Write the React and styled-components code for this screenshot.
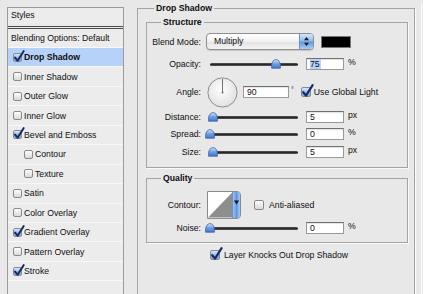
import React from "react";
import styled, { createGlobalStyle } from "styled-components";

const GlobalStyle = createGlobalStyle`
  html, body {
    margin: 0;
    padding: 0;
    background: #e8e8e8;
  }
  body {
    font-family: "Liberation Sans", Arial, sans-serif;
    font-size: 8.7px;
    color: #0e0e0e;
  }
`;

const Page = styled.div`
  display: flex;
  align-items: flex-start;
  width: 423px;
  height: 294px;
  overflow: hidden;
  padding: 3px 0 0 7px;
  box-sizing: border-box;
`;

const StylesList = styled.div`
  flex-shrink: 0;
  width: 117px;
  height: 300px;
  margin-top: 4px;
  box-sizing: border-box;
  border: 1px solid #9b9b9b;
  background: #ececec;
`;

const ListHeader = styled.div`
  height: 21px;
  box-sizing: border-box;
  padding: 1px 0 0 3px;
  line-height: 12px;
  border-bottom: 3px double #4c4c4c;
`;

const ListRow = styled.div`
  display: flex;
  align-items: center;
  gap: 2px;
  height: ${(p) => p.$h || 19.45}px;
  box-sizing: border-box;
  padding-left: ${(p) => p.$pad}px;
  border-bottom: 1px solid #f8f8f8;
  background: ${(p) => (p.$active ? "#b6d2f8" : "transparent")};
  font-weight: ${(p) => (p.$active ? "bold" : "normal")};
`;

const Group = styled.fieldset`
  margin: 0;
  min-width: 0;
  border: 1px solid #a4a4a4;
  box-shadow: 1px 1px 0 #fafafa;
  padding: ${(p) => p.$pad};
  margin-top: ${(p) => p.$mt || 0}px;
`;

const OuterGroup = styled(Group)`
  flex-shrink: 0;
  width: 278px;
  height: 320px;
  box-sizing: border-box;
  margin-left: 13px;
`;

const Legend = styled.legend`
  font-weight: bold;
  line-height: 10px;
  padding: 0 2px;
  margin-left: ${(p) => p.$ml}px;
`;

const Divider = styled.div`
  flex-shrink: 0;
  width: 1px;
  height: 300px;
  margin-left: 6px;
  background: #fbfbfb;
`;

const Row = styled.div`
  display: flex;
  align-items: center;
  height: ${(p) => p.$h}px;
  margin-top: ${(p) => p.$mt}px;
  padding-left: ${(p) => p.$pl || 0}px;
`;

const Label = styled.span`
  flex-shrink: 0;
  width: 54px;
  margin-right: 5px;
  text-align: right;
  white-space: nowrap;
`;

const Select = styled.div`
  display: flex;
  width: 108px;
  height: 17px;
  box-sizing: border-box;
  border: 1px solid #8e8e8e;
  border-radius: 4px;
  overflow: hidden;
  background: linear-gradient(#ffffff, #f1f1f1 50%, #e2e2e2 51%, #f4f4f4);
  box-shadow: 0 1px 1px rgba(0, 0, 0, 0.15);
`;

const SelectText = styled.span`
  flex: 1;
  padding-left: 7px;
  line-height: 15px;
`;

const SelectArrows = styled.span`
  display: flex;
  align-items: center;
  justify-content: center;
  width: 13px;
  border-left: 1px solid #6f8fbd;
  background: linear-gradient(#d4e6fb, #8fbaf0 48%, #5d97e2 52%, #a9cdf6);
`;

const Swatch = styled.div`
  width: 30px;
  height: 12px;
  margin-left: 7px;
  box-sizing: border-box;
  border: 1px solid #777;
  background: #000;
`;

const SliderWrap = styled.div`
  position: relative;
  display: flex;
  align-items: center;
  width: 94px;
  height: 12px;
`;

const Track = styled.div`
  flex: 1;
  height: 3px;
  margin: 1px 2px 0 4px;
  border-radius: 2px;
  background: linear-gradient(#5a5a5a, #1f1f1f 60%, #6a6a6a);
`;

const Thumb = styled.svg`
  position: absolute;
  top: 1px;
`;

const Field = styled.div`
  width: ${(p) => p.$w}px;
  height: 12px;
  margin-left: ${(p) => p.$ml}px;
  box-sizing: border-box;
  padding-left: 3px;
  line-height: 10px;
  background: #fff;
  border: 1px solid #9a9a9a;
  border-top-color: #707070;
  box-shadow: inset 0 1px 1px rgba(0, 0, 0, 0.12);
`;

const Selected = styled.span`
  background: #b5d3fb;
  padding-right: 1px;
`;

const Unit = styled.span`
  align-self: flex-start;
  margin-top: ${(p) => p.$top || 0}px;
  margin-left: ${(p) => p.$ml || 4}px;
  line-height: 9px;
  font-size: ${(p) => p.$fs || 8.7}px;
`;

const Dial = styled.svg`
  flex-shrink: 0;
  margin-left: 1px;
`;

const Box = styled.span`
  position: relative;
  flex-shrink: 0;
  display: inline-block;
  width: ${(p) => p.$size}px;
  height: ${(p) => p.$size}px;
  margin-left: ${(p) => p.$ml || 0}px;
  box-sizing: border-box;
  border: 1px solid #8a8a8a;
  border-radius: 2px;
  background: ${(p) =>
    p.$on
      ? "linear-gradient(#d8e8fb, #93bbee 55%, #7eaae6)"
      : "linear-gradient(#ffffff, #e9e9e9 55%, #d9d9d9)"};
`;

const Tick = styled.svg`
  position: absolute;
  left: -1px;
  top: -4px;
  overflow: visible;
`;

const Caption = styled.span`
  margin-left: ${(p) => p.$ml}px;
  white-space: nowrap;
`;

const ContourPicker = styled.div`
  display: flex;
  width: 34px;
  height: 28px;
  margin-left: 1px;
  box-sizing: border-box;
  border: 1px solid #8a8a8a;
  border-radius: 0 4px 4px 0;
  overflow: hidden;
  background: #fff;
`;

const ContourStrip = styled.span`
  display: flex;
  justify-content: center;
  padding-top: 8px;
  width: 8px;
  box-sizing: border-box;
  border-left: 1px solid #6f8fbd;
  background: linear-gradient(90deg, #9cc3f3, #5f98e2 50%, #a4c9f5);
`;

const Checkbox = ({ on, size = 10, ml }) => (
  <Box $on={on} $size={size} $ml={ml}>
    {on && (
      <Tick width={size + 2} height={size + 4} viewBox="0 0 12 14">
        <path
          d="M2.2 8.2 L5 11.6 L11.6 1.2"
          fill="none"
          stroke="#172a68"
          strokeWidth="2.2"
          strokeLinecap="round"
          strokeLinejoin="round"
        />
      </Tick>
    )}
  </Box>
);

const Slider = ({ pct }) => (
  <SliderWrap>
    <Track />
    <Thumb width="10" height="10" viewBox="0 0 10 10" style={{ left: 4 + pct * 88 - 5 }}>
      <defs>
        <linearGradient id="thumbfill" x1="0" y1="0" x2="0" y2="1">
          <stop offset="0" stopColor="#d6e7fc" />
          <stop offset="0.5" stopColor="#6c9fe4" />
          <stop offset="1" stopColor="#3f77c9" />
        </linearGradient>
      </defs>
      <path
        d="M5 0.6 C7.6 0.6 9.4 3.4 9.4 6.2 L9.4 9.2 L0.6 9.2 L0.6 6.2 C0.6 3.4 2.4 0.6 5 0.6 Z"
        fill="url(#thumbfill)"
        stroke="#3b63a3"
        strokeWidth="0.8"
      />
    </Thumb>
  </SliderWrap>
);

const SliderRow = ({ label, value, unit, pct, mt, selected }) => (
  <Row $h={12} $mt={mt}>
    <Label>{label}</Label>
    <Slider pct={pct} />
    <Field $w={38} $ml={6}>{selected ? <Selected>{value}</Selected> : value}</Field>
    <Unit>{unit}</Unit>
  </Row>
);

const layers = [
  { name: "Drop Shadow", on: true, active: true },
  { name: "Inner Shadow" },
  { name: "Outer Glow" },
  { name: "Inner Glow" },
  { name: "Bevel and Emboss", on: true },
  { name: "Contour", indent: true },
  { name: "Texture", indent: true },
  { name: "Satin" },
  { name: "Color Overlay" },
  { name: "Gradient Overlay", on: true },
  { name: "Pattern Overlay" },
  { name: "Stroke", on: true },
];

export default function App() {
  return (
    <>
      <GlobalStyle />
      <Page>
        <StylesList>
          <ListHeader>Styles</ListHeader>
          <ListRow $h={19} $pad={3}>Blending Options: Default</ListRow>
          {layers.map((l) => (
            <ListRow key={l.name} $pad={l.indent ? 16 : 5} $active={l.active}>
              <Checkbox on={l.on} size={9} />
              <span>{l.name}</span>
            </ListRow>
          ))}
          <ListRow $pad={5} />
        </StylesList>

        <OuterGroup $pad="4px 6px 0 8px">
          <Legend $ml={8}>Drop Shadow</Legend>

          <Group $pad="0 0 9px 0">
            <Legend $ml={14}>Structure</Legend>
            <Row $h={17} $mt={6}>
              <Label>Blend Mode:</Label>
              <Select>
                <SelectText>Multiply</SelectText>
                <SelectArrows>
                  <svg width="7" height="11" viewBox="0 0 7 11">
                    <path d="M3.5 1 L6 4.2 L1 4.2 Z M3.5 10 L6 6.8 L1 6.8 Z" fill="#1c1c1c" />
                  </svg>
                </SelectArrows>
              </Select>
              <Swatch />
            </Row>
            <SliderRow label="Opacity:" value="75" unit="%" pct={0.75} mt={8} selected />
            <Row $h={30} $mt={7}>
              <Label>Angle:</Label>
              <Dial width="31" height="31" viewBox="0 0 31 31">
                <defs>
                  <radialGradient id="dialfill" cx="0.45" cy="0.4" r="0.7">
                    <stop offset="0" stopColor="#ffffff" />
                    <stop offset="1" stopColor="#dcdcdc" />
                  </radialGradient>
                </defs>
                <circle cx="15.5" cy="15.5" r="14.6" fill="url(#dialfill)" stroke="#8c8c8c" />
                <line x1="15.5" y1="15.5" x2="15.5" y2="2" stroke="#707070" strokeWidth="1" />
                <circle cx="15.5" cy="15.5" r="1" fill="#707070" />
              </Dial>
              <Field $w={46} $ml={5}>90</Field>
              <Unit $ml={2} $fs={7} $top={8}>°</Unit>
              <Checkbox on ml={7} />
              <Caption $ml={3}>Use Global Light</Caption>
            </Row>
            <SliderRow label="Distance:" value="5" unit="px" pct={0.03} mt={4} />
            <SliderRow label="Spread:" value="0" unit="%" pct={0} mt={5} />
            <SliderRow label="Size:" value="5" unit="px" pct={0.03} mt={6} />
          </Group>

          <Group $pad="0 0 8px 0" $mt={5}>
            <Legend $ml={14}>Quality</Legend>
            <Row $h={28} $mt={8}>
              <Label>Contour:</Label>
              <ContourPicker>
                <svg width="25" height="26" viewBox="0 0 25 26">
                  <path d="M0 26 L25 0 L25 26 Z" fill="#8d8d8d" />
                </svg>
                <ContourStrip>
                  <svg width="5" height="5" viewBox="0 0 5 5">
                    <path d="M0 0.5 L5 0.5 L2.5 4.5 Z" fill="#111" />
                  </svg>
                </ContourStrip>
              </ContourPicker>
              <Checkbox ml={13} />
              <Caption $ml={5}>Anti-aliased</Caption>
            </Row>
            <SliderRow label="Noise:" value="0" unit="%" pct={0} mt={3} />
          </Group>

          <Row $h={10} $mt={7} $pl={64}>
            <Checkbox on />
            <Caption $ml={4}>Layer Knocks Out Drop Shadow</Caption>
          </Row>
        </OuterGroup>
        <Divider />
      </Page>
    </>
  );
}
